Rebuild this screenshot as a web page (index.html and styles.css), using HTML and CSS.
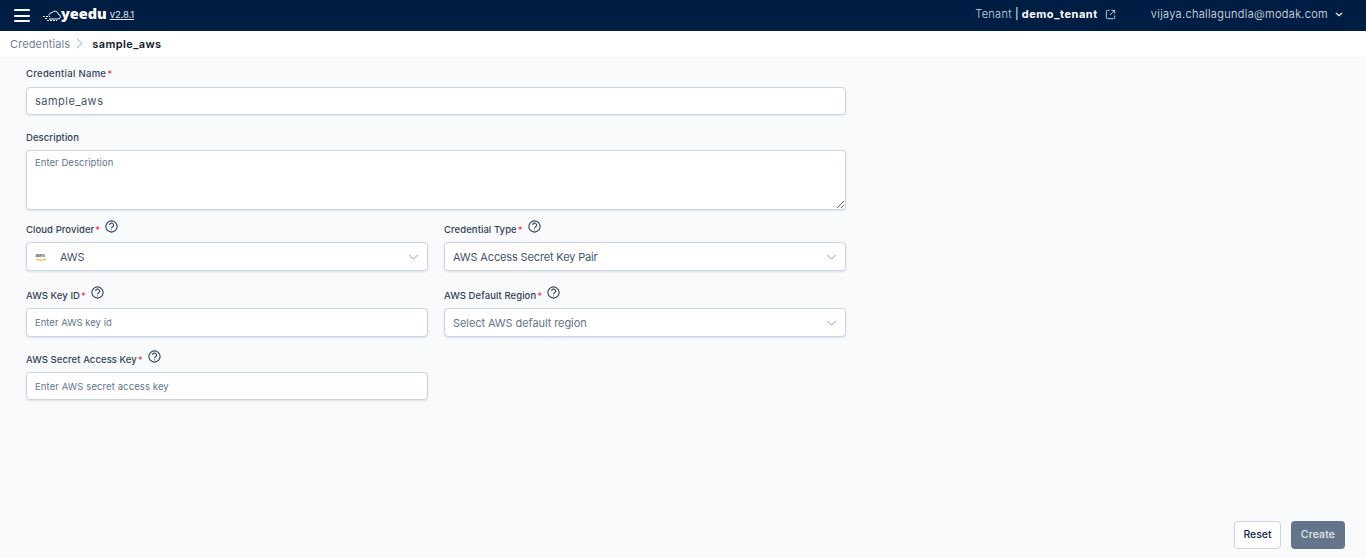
FILE: index.html
```html
<!DOCTYPE html>
<html lang="en">
<head>
<meta charset="utf-8">
<title>Credentials</title>
<link rel="stylesheet" href="styles.css">
</head>
<body>
<header class="topbar">
  <div class="brand">
    <button class="menu" aria-label="Menu"><span></span><span></span><span></span></button>
    <svg class="logo" viewBox="0 0 18 12" width="18" height="12" fill="none" stroke="#fff" stroke-width="1">
      <path d="M6 9h9a2.300 2.300 0 0 0 .3-4.600 3.400 3.400 0 0 0-6.300-1.600A2.600 2.600 0 0 0 6 5.500"/>
      <path d="M0 6.500h7M2 8.500h3M4 10.500h10" stroke-dasharray="2 1"/>
    </svg>
    <span class="wordmark">yeedu</span>
    <a class="version">v2.8.1</a>
  </div>
  <div class="top-right">
    <span class="tenant"><span class="tenant-label">Tenant</span> <i class="pipe">|</i> <b>demo_tenant</b></span>
    <svg class="ext" viewBox="0 0 12 12" width="11" height="11" fill="none" stroke="#cbd5e1" stroke-width="1">
      <path d="M5 1.500H2.500a1 1 0 0 0-1 1v7a1 1 0 0 0 1 1h7a1 1 0 0 0 1-1V7M7 1.500h3.500V5M10.500 1.500 5.500 6.500"/>
    </svg>
    <span class="user">vijaya.challagundla@modak.com</span>
    <svg class="user-caret" viewBox="0 0 10 6" width="8" height="5" fill="none" stroke="#fff" stroke-width="1.400"><path d="M1 1l4 3.500L9 1"/></svg>
  </div>
</header>

<nav class="crumbs">
  <span class="crumb">Credentials</span>
  <svg class="crumb-sep" viewBox="0 0 7 11" width="7" height="11" fill="none" stroke="#94a3b8" stroke-width="1"><path d="M1 .8l5 4.700-5 4.700"/></svg>
  <span class="crumb-current">sample_aws</span>
</nav>

<main class="page">
  <form class="form">
    <div class="field name-field">
      <label class="label name-label">Credential Name<em>*</em></label>
      <div class="control value">sample_aws</div>
    </div>
    <div class="field desc-field">
      <label class="label">Description</label>
      <textarea class="textarea" placeholder="Enter Description"></textarea>
    </div>
    <div class="grid">
      <div class="field">
        <label class="label">Cloud Provider<em>*</em>
          <svg class="help" viewBox="0 0 12 12" width="13" height="13" fill="none" stroke="#334155" stroke-width="1"><circle cx="6" cy="6" r="5.200"/><path d="M4.300 4.700a1.800 1.800 0 1 1 2.700 1.500c-.7.400-1 .7-1 1.400"/><path d="M6 8.700v.8"/></svg>
        </label>
        <div class="control select tall">
          <svg class="aws" viewBox="0 0 14 10" width="13" height="10">
            <text x="0.500" y="5.500" font-size="5.500" font-weight="700" font-family="Liberation Sans, sans-serif" fill="#475569">aws</text>
            <path d="M1 7c3 2 8 2 11.500 0" fill="none" stroke="#f59e0b" stroke-width="1"/>
          </svg>
          <span class="select-text aws-text">AWS</span>
          <svg class="caret" viewBox="0 0 12 7" width="11" height="6" fill="none" stroke="#8494ab" stroke-width="1.100"><path d="M1 1l5 5 5-5"/></svg>
        </div>
      </div>
      <div class="field">
        <label class="label">Credential Type<em>*</em>
          <svg class="help" viewBox="0 0 12 12" width="13" height="13" fill="none" stroke="#334155" stroke-width="1"><circle cx="6" cy="6" r="5.200"/><path d="M4.300 4.700a1.800 1.800 0 1 1 2.700 1.500c-.7.400-1 .7-1 1.400"/><path d="M6 8.700v.8"/></svg>
        </label>
        <div class="control select tall">
          <span class="select-text">AWS Access Secret Key Pair</span>
          <svg class="caret" viewBox="0 0 12 7" width="11" height="6" fill="none" stroke="#8494ab" stroke-width="1.100"><path d="M1 1l5 5 5-5"/></svg>
        </div>
      </div>
      <div class="field second-row">
        <label class="label">AWS Key ID<em>*</em>
          <svg class="help" viewBox="0 0 12 12" width="13" height="13" fill="none" stroke="#334155" stroke-width="1"><circle cx="6" cy="6" r="5.200"/><path d="M4.300 4.700a1.800 1.800 0 1 1 2.700 1.500c-.7.400-1 .7-1 1.400"/><path d="M6 8.700v.8"/></svg>
        </label>
        <div class="control placeholder tall">Enter AWS key id</div>
      </div>
      <div class="field second-row">
        <label class="label">AWS Default Region<em>*</em>
          <svg class="help" viewBox="0 0 12 12" width="13" height="13" fill="none" stroke="#334155" stroke-width="1"><circle cx="6" cy="6" r="5.200"/><path d="M4.300 4.700a1.800 1.800 0 1 1 2.700 1.500c-.7.400-1 .7-1 1.400"/><path d="M6 8.700v.8"/></svg>
        </label>
        <div class="control select tall">
          <span class="select-text muted">Select AWS default region</span>
          <svg class="caret" viewBox="0 0 12 7" width="11" height="6" fill="none" stroke="#8494ab" stroke-width="1.100"><path d="M1 1l5 5 5-5"/></svg>
        </div>
      </div>
      <div class="field">
        <label class="label">AWS Secret Access Key<em>*</em>
          <svg class="help" viewBox="0 0 12 12" width="13" height="13" fill="none" stroke="#334155" stroke-width="1"><circle cx="6" cy="6" r="5.200"/><path d="M4.300 4.700a1.800 1.800 0 1 1 2.700 1.500c-.7.400-1 .7-1 1.400"/><path d="M6 8.700v.8"/></svg>
        </label>
        <div class="control placeholder secret">Enter AWS secret access key</div>
      </div>
    </div>
  </form>
  <div class="actions">
    <button class="btn btn-reset" type="button">Reset</button>
    <button class="btn btn-create" type="button">Create</button>
  </div>
</main>
</body>
</html>
```
FILE: styles.css
```css
* { box-sizing: border-box; }
html, body { height: 100%; }
body {
  margin: 0;
  display: flex;
  flex-direction: column;
  height: 558px;
  overflow: hidden;
  background: #f8fafc;
  color: #1e293b;
  font-family: "Inter", "Liberation Sans", sans-serif;
}
.topbar {
  height: 31px;
  flex: none;
  background: #001e43;
  color: #fff;
  display: flex;
  align-items: center;
  justify-content: space-between;
  padding: 0 23px 0 14px;
}
.brand { display: flex; align-items: center; }
.menu {
  width: 16px; height: 13px; padding: 0; border: 0; background: none;
  display: flex; flex-direction: column; justify-content: space-between;
}
.menu span { display: block; height: 2px; background: #fff; border-radius: 1px; }
.logo { margin-left: 13px; }
.wordmark { font-family: "Open Sans", sans-serif; font-weight: 800; font-size: 14.500px; line-height: 1; margin-top: -3px; }
.version { font-size: 9.500px; line-height: 11px; text-decoration: underline; margin: -2px 0 0 3px; color: #e2e8f0; letter-spacing: -.15px; }
.top-right { display: flex; align-items: center; font-size: 11px; line-height: 13px; margin-top: -2px; }
.tenant { color: #cbd5e1; }
.tenant-label { letter-spacing: .3px; font-weight: 300; }
.tenant b { color: #fff; font-weight: 700; letter-spacing: .55px; }
.pipe { font-style: normal; color: #fff; }
.ext { margin-left: 7px; }
.user { margin-left: 35px; color: #e2e8f0; letter-spacing: .33px; font-weight: 300; }
.user-caret { margin-left: 7px; }
.crumbs {
  height: 26px;
  flex: none;
  background: #fff;
  display: flex;
  align-items: center;
  padding: 0 0 1px 10px;
  font-size: 11px;
}
.crumb { color: #6f7f96; letter-spacing: .12px; }
.crumb-sep { margin: 0 9px 0 6px; }
.crumb-current { color: #0f172a; font-weight: 600; letter-spacing: .4px; }
.page {
  flex: 1;
  display: flex;
  flex-direction: column;
  justify-content: space-between;
  padding: 10px 21px 9px 26px;
}
.form { width: 820px; display: flex; flex-direction: column; gap: 16px; }
.field { display: flex; flex-direction: column; }
.label {
  font-size: 9.500px;
  line-height: 14px;
  height: 19px;
  font-weight: 500;
  color: #334155;
  display: flex;
  align-items: flex-start;
  letter-spacing: .07px;
}
.name-label { height: 20px; letter-spacing: .3px; }
.label em { color: #ef4444; font-style: normal; margin-left: 1px; }
.help { margin: -3px 0 0 5px; }
.control {
  background: #fff;
  border: 1px solid #cbd5e1;
  border-radius: 4px;
  box-shadow: 0 1px 2px rgba(148,163,184,.25);
  height: 28px;
  display: flex;
  align-items: center;
  padding: 0 8px;
  font-size: 11px;
}
.tall { height: 29px; }
.value { color: #475569; letter-spacing: .5px; }
.textarea {
  display: block;
  width: 100%;
  height: 60px;
  background: #fff;
  border: 1px solid #cbd5e1;
  border-radius: 4px;
  box-shadow: 0 1px 2px rgba(148,163,184,.25);
  padding: 6px 8px;
  font: 9.500px "Inter", sans-serif;
  line-height: 12px;
  letter-spacing: .05px;
  outline: none;
}
.textarea::placeholder { color: #64748b; opacity: 1; }
.grid {
  display: grid;
  grid-template-columns: 402px 402px;
  column-gap: 16px;
  row-gap: 16px;
  margin-top: -3px;
}
.second-row { margin-top: 2px; }
.placeholder { color: #64748b; font-size: 9.500px; }
.secret { letter-spacing: .1px; }
.select { justify-content: flex-start; }
.select-text { color: #475569; font-size: 11px; flex: 1; letter-spacing: -.15px; }
.aws-text { margin-left: 12px; }
.muted { color: #64748b; letter-spacing: -.08px; }
.caret { flex: none; margin-right: 0; }
.actions { display: flex; justify-content: flex-end; gap: 10px; }
.btn {
  height: 28px;
  border-radius: 4px;
  font: 500 10.500px/24px "Inter", sans-serif;
  padding: 0;
}
.btn-reset { width: 47px; background: #fff; border: 1px solid #cbd5e1; color: #0f2847; }
.btn-create { width: 54px; background: #64748b; border: 0; color: #e2e8f0; letter-spacing: .15px; }
```
